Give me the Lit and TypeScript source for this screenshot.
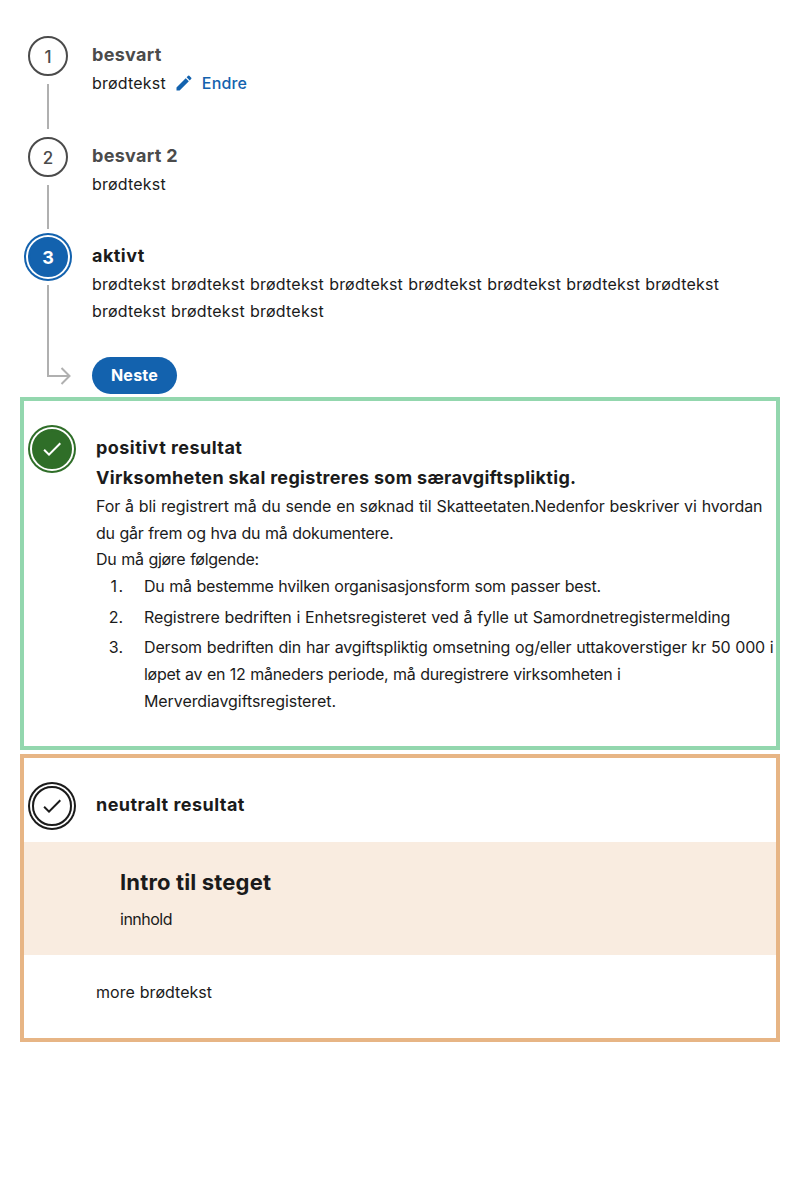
import { LitElement, html, css, svg } from "lit";
import { customElement, property } from "lit/decorators.js";

const check = svg`<path d="M9 16.2 4.8 12l-1.4 1.4L9 19 21 7l-1.4-1.4z" fill="currentColor"/>`;

@customElement("step-badge")
class StepBadge extends LitElement {
  @property() variant = "passive";
  static styles = css`
    :host { display: block; flex: none; }
    .badge {
      box-sizing: border-box; width: 40px; height: 40px; border-radius: 50%;
      display: flex; align-items: center; justify-content: center;
      border: 2px solid #4b4b4b; color: #4b4b4b; font-size: 18px; line-height: 30px;
    }
    .passive { padding-top: 2px; font-weight: 500; font-size: 17px; }
    .active { padding-top: 2px; background: #1362ae; border-color: #1362ae; color: #fff; font-weight: 700; box-shadow: 0 0 0 2px #fff, 0 0 0 4px #1362ae; }
    .positive { background: #2f6e28; border-color: #2f6e28; color: #fff; box-shadow: 0 0 0 2px #fff, 0 0 0 4px #2f6e28; }
    .neutral { border-color: #1b1b1b; color: #1b1b1b; box-shadow: 0 0 0 2px #fff, 0 0 0 4px #1b1b1b; }
  `;
  render() {
    return html`<div class="badge ${this.variant}"><slot></slot></div>`;
  }
}

@customElement("app-root")
class AppRoot extends LitElement {
  static styles = css`
    :host {
      display: block; box-sizing: border-box; padding: 36px 20px 0;
      font: 400 16px/26.72px Inter, sans-serif; color: #1b1b1b; background: #fff;
    }
    h3, h4, h2, p, ol { margin: 0; }
    h3, h4 { font-size: 18px; line-height: 30.06px; font-weight: 700; letter-spacing: 0.31px; }
    h3.wide { letter-spacing: 0.46px; }
    .step { display: flex; gap: 24px; padding-left: 8px; }
    .rail { display: flex; flex-direction: column; align-items: center; gap: 8px; width: 40px; flex: none; padding-bottom: 8px; }
    .rail.last { padding-bottom: 12px; }
    .line { width: 2px; flex: 1; background: #b0b0b0; }
    .elbow { flex: 1; display: flex; flex-direction: column; width: 40px; }
    .elbow .line { margin-left: 19px; }
    .arrow { display: block; flex: none; width: 24px; height: 18px; margin-left: 19px; margin-top: -4px; }
    .body { flex: 1; min-width: 0; padding: 4px 0 39.8px; }
    .done { color: #4b4b4b; }
    .row { display: flex; align-items: center; }
    .edit { display: flex; align-items: center; color: #1362ae; font-weight: 500; margin-left: 8px; gap: 8px; letter-spacing: 0.15px; }
    .edit svg { width: 20px; height: 20px; }
    .current .body { padding-bottom: 3px; }
    .next {
      display: block; margin-top: 32px; width: 85px; height: 37px; padding: 0; border: 0; border-radius: 19px;
      background: #1362ae; color: #fff; font: 700 16px/37px Inter, sans-serif; letter-spacing: 0.25px;
    }
    .box { border: 4px solid; }
    .green { border-color: #93d7ae; padding: 28px 0 27px; }
    .orange { border-color: #e7b585; margin-top: 4px; padding: 28px 0 32px; }
    .box .body { padding-bottom: 0; }
    .icon { width: 24px; height: 24px; }
    p, li, .row { word-spacing: 0.5px; }
    .brod { letter-spacing: 0.2px; }
    .t0 { letter-spacing: -0.08px; }
    .t1 { letter-spacing: -0.105px; }
    .t2 { letter-spacing: -0.13px; }
    .t2b { letter-spacing: -0.165px; }
    .t3 { letter-spacing: -0.27px; }
    .t4 { letter-spacing: -0.29px; }
    ol { list-style: none; counter-reset: n; padding: 0; }
    li { display: flex; counter-increment: n; margin-bottom: 4px; }
    li::before { content: counter(n) "."; width: 27px; margin-right: 21px; text-align: right; flex: none; }
    li:first-child::before { letter-spacing: 1.5px; width: 28.5px; margin-right: 19.5px; }
    .nowrap { white-space: nowrap; }
    .intro { background: #f9ece0; margin-top: 16px; padding: 24px 24px 23px 96px; }
    .intro h2 { font-size: 22px; line-height: 32px; font-weight: 700; margin-bottom: 8px; letter-spacing: 0.16px; }
    .intro p { letter-spacing: -0.5px; }
    .more { padding: 24px 0 0 72px; letter-spacing: 0.02px; }
  `;
  render() {
    return html`
      <div class="step">
        <div class="rail"><step-badge>1</step-badge><div class="line"></div></div>
        <div class="body">
          <h3 class="done">besvart</h3>
          <div class="row">
            <span class="brod">brødtekst</span>
            <span class="edit">
              <svg viewBox="0 0 24 24"><path fill="currentColor" d="M3 17.25V21h3.75L17.81 9.94l-3.75-3.75L3 17.25zM20.71 7.04a1 1 0 0 0 0-1.41l-2.34-2.34a1 1 0 0 0-1.41 0l-1.83 1.83 3.75 3.75 1.83-1.83z"/></svg>
              <span>Endre</span>
            </span>
          </div>
        </div>
      </div>
      <div class="step">
        <div class="rail"><step-badge>2</step-badge><div class="line"></div></div>
        <div class="body">
          <h3 class="done">besvart 2</h3>
          <p class="brod">brødtekst</p>
        </div>
      </div>
      <div class="step current">
        <div class="rail last">
          <step-badge variant="active">3</step-badge>
          <div class="elbow">
            <div class="line"></div>
            <svg class="arrow" viewBox="0 0 24 18" fill="none" stroke="#b0b0b0" stroke-width="2"><path d="M1 0V9H22.5M14.5 1L22.5 9L14.5 17"/></svg>
          </div>
        </div>
        <div class="body">
          <h3 class="wide">aktivt</h3>
          <p class="brod">brødtekst brødtekst brødtekst brødtekst brødtekst brødtekst brødtekst brødtekst brødtekst brødtekst brødtekst</p>
          <button class="next">Neste</button>
        </div>
      </div>
      <div class="box green">
        <div class="step">
          <step-badge variant="positive"><svg class="icon" width="24" height="24" viewBox="0 0 24 24">${check}</svg></step-badge>
          <div class="body">
            <h3 class="wide">positivt resultat</h3>
            <h4>Virksomheten skal registreres som særavgiftspliktig.</h4>
            <p><span class="t1">For å bli registrert må du sende en søknad til Skatteetaten.Nedenfor beskriver vi hvordan</span><br><span class="t3">du går frem og hva du må dokumentere.</span></p>
            <p class="t3">Du må gjøre følgende:</p>
            <ol>
              <li><span class="t3">Du må bestemme hvilken organisasjonsform som passer best.</span></li>
              <li><span class="t2">Registrere bedriften i Enhetsregisteret ved å fylle ut Samordnetregistermelding</span></li>
              <li><span class="nowrap"><span class="t2b">Dersom bedriften din har avgiftspliktig omsetning og/eller uttakoverstiger kr 50 000 i</span><br><span class="t4">løpet av en 12 måneders periode, må duregistrere virksomheten i</span><br><span class="t0">Merverdiavgiftsregisteret.</span></span></li>
            </ol>
          </div>
        </div>
      </div>
      <div class="box orange">
        <div class="step">
          <step-badge variant="neutral"><svg class="icon" width="24" height="24" viewBox="0 0 24 24">${check}</svg></step-badge>
          <div class="body"><h3 class="wide">neutralt resultat</h3></div>
        </div>
        <div class="intro">
          <h2>Intro til steget</h2>
          <p>innhold</p>
        </div>
        <p class="more">more brødtekst</p>
      </div>
    `;
  }
}
